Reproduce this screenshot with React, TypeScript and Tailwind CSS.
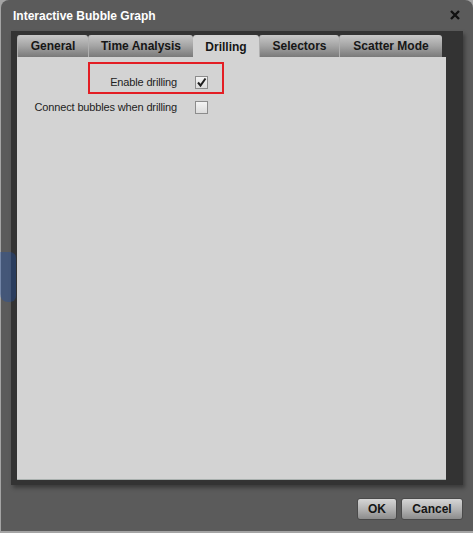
import React from 'react';

const tabs = ['General', 'Time Analysis', 'Drilling', 'Selectors', 'Scatter Mode'];
const tabWidths: Record<string, string> = {
  General: 'w-[71px]',
  'Time Analysis': 'w-[105px]',
  Drilling: 'w-[66px]',
  Selectors: 'w-[80px]',
  'Scatter Mode': 'w-[103px]',
};

const Checkbox: React.FC<{ checked?: boolean }> = ({ checked }) => (
  <div className="w-[13px] h-[13px] border border-[#8c8c8c] bg-gradient-to-b from-[#f4f4f4] to-[#dcdcdc] flex items-center justify-center">
    {checked && (
      <svg width="11" height="11" viewBox="0 0 11 11">
        <path d="M2 5.5 L4.5 8.5 L9.5 1.5" fill="none" stroke="#1e1e1e" strokeWidth="2" />
      </svg>
    )}
  </div>
);

const DialogButton: React.FC<{ children: React.ReactNode; width: string }> = ({ children, width }) => (
  <button
    className={`${width} h-[22px] rounded-[3px] border border-[#4a4a4a] bg-gradient-to-b from-[#d6d6d6] via-[#b4b4b4] to-[#8c8c8c] text-[12px] font-bold text-[#141414] flex items-center justify-center`}
  >
    {children}
  </button>
);

export default function App() {
  return (
    <div
      className="relative w-[473px] h-[533px] bg-[#a4a4a4] overflow-hidden"
      style={{ fontFamily: '"Liberation Sans", Arial, sans-serif' }}
    >
      <div className="ml-[1px] w-[472px] h-[531px] bg-[#5b5b5b] rounded-t-[8px] flex flex-col">
        {/* title bar */}
        <div className="h-[31px] flex items-center justify-between pl-[12px] pr-[13px]">
          <span className="text-[12px] font-bold text-white">Interactive Bubble Graph</span>
          <svg width="10" height="10" viewBox="0 0 10 10" className="mb-[1px]">
            <path d="M1 1 L9 9 M9 1 L1 9" stroke="#111" strokeWidth="2.4" />
          </svg>
        </div>

        {/* dark frame */}
        <div className="ml-[10px] w-[452px] h-[454px] bg-[#333333] pt-[4px] pl-[6px] pr-[17px] pb-[5px] flex flex-col shadow-[2px_3px_4px_rgba(0,0,0,0.35)]">
          <div className="h-[22px] flex">
            {tabs.map((t) => {
              const active = t === 'Drilling';
              return (
                <div
                  key={t}
                  className={`${tabWidths[t]} h-full rounded-t-[3px] flex items-center justify-center text-[12px] font-bold text-[#161616] ${
                    active
                      ? 'bg-[#d3d3d3] pt-[2px]'
                      : 'bg-gradient-to-b from-[#c8c8c8] via-[#a4a4a4] to-[#7a7a7a] border-l border-[#b0b0b0]'
                  }`}
                >
                  {t}
                </div>
              );
            })}
          </div>

          <div className="relative flex-1 bg-[#d3d3d3] border-b border-[#a9b0ae] pt-[13px]">
            <div className="h-[25px] flex items-center">
              <span className="w-[160px] text-right text-[11px] tracking-[-0.15px] text-[#222]">Enable drilling</span>
              <div className="ml-[18px]">
                <Checkbox checked />
              </div>
            </div>
            <div className="h-[25px] flex items-center">
              <span className="w-[160px] text-right text-[11px] tracking-[-0.15px] text-[#222]">
                Connect bubbles when drilling
              </span>
              <div className="ml-[18px]">
                <Checkbox />
              </div>
            </div>
            {/* annotation highlight */}
            <div className="absolute left-[71px] top-[5px] w-[136px] h-[32px] border-2 border-[#e31e24] pointer-events-none" />
          </div>
        </div>

        {/* footer */}
        <div className="flex justify-end gap-[4px] pt-[13px] pr-[10px]">
          <DialogButton width="w-[40px]">OK</DialogButton>
          <DialogButton width="w-[62px]">Cancel</DialogButton>
        </div>
      </div>

      {/* bubble from the chart behind, seen through the frame */}
      <div className="absolute left-0 top-[252px] w-[16px] h-[50px] rounded-r-[6px] rounded-bl-[8px] bg-[#1a4fb0]/35 pointer-events-none" />
    </div>
  );
}
